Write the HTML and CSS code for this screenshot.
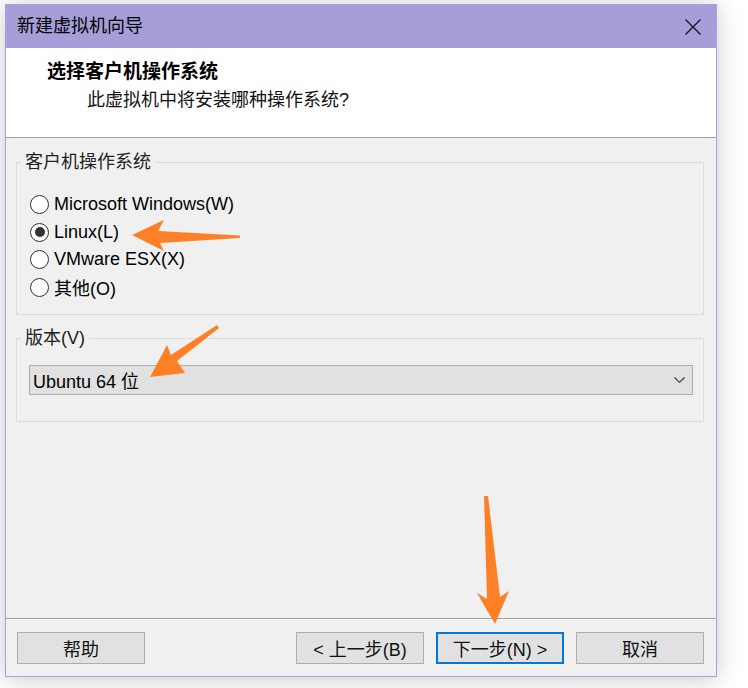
FILE: index.html
```html
<!DOCTYPE html>
<html lang="zh-CN">
<head>
<meta charset="utf-8">
<title>新建虚拟机向导</title>
<link rel="stylesheet" href="styles.css">
</head>
<body>
<div class="window">
  <div class="titlebar">
    <span class="title">新建虚拟机向导</span>
    <svg class="close" width="16" height="16" viewBox="0 0 16 16"><path d="M0.5 0.5 L15.5 15.5 M15.5 0.5 L0.5 15.5" stroke="#111" stroke-width="1.2" fill="none"/></svg>
  </div>
  <div class="header">
    <div class="heading">选择客户机操作系统</div>
    <div class="sub">此虚拟机中将安装哪种操作系统?</div>
  </div>
  <div class="content">
    <fieldset class="group g1">
      <legend>客户机操作系统</legend>
      <div class="radios">
        <div class="radio"><span class="circle"></span>Microsoft Windows(W)</div>
        <div class="radio"><span class="circle checked"></span>Linux(L)</div>
        <div class="radio"><span class="circle"></span>VMware ESX(X)</div>
        <div class="radio"><span class="circle"></span>其他(O)</div>
      </div>
    </fieldset>
    <fieldset class="group g2">
      <legend>版本(V)</legend>
      <div class="select">
        <span>Ubuntu 64 位</span>
        <svg class="chev" width="11" height="6" viewBox="0 0 11 6"><path d="M0.5 0.5 L5.5 5.3 L10.5 0.5" stroke="#333" stroke-width="1.1" fill="none"/></svg>
      </div>
    </fieldset>
  </div>
  <div class="footer">
    <div class="btn">帮助</div>
    <div class="btn push">&lt; 上一步(B)</div>
    <div class="btn primary">下一步(N) &gt;</div>
    <div class="btn">取消</div>
  </div>
</div>
<svg class="arrows" width="748" height="688" viewBox="0 0 748 688">
  <polygon fill="#fe8026" points="132,235 164,220 158,231 240,235.5 240,238 160,243 164,251"/>
  <polygon fill="#fe8026" points="150,377 167,345 171,355 217,325 219,328 177,361 185,373"/>
  <polygon fill="#fe8026" points="484,496 488,496 500,597 509,591 495,624 477,593 487,599"/>
</svg>
</body>
</html>
```
FILE: styles.css
```css
html, body {
  margin: 0;
  padding: 0;
  background: #ffffff;
}
body {
  position: relative;
  width: 748px;
  height: 688px;
  overflow: hidden;
  font-family: "Liberation Sans", "Noto Sans CJK SC", sans-serif;
  font-size: 18px;
  color: #000;
}
.window {
  margin: 4px 0 0 5px;
  width: 712px;
  height: 673px;
  box-sizing: border-box;
  border: 1px solid #ab9fe0;
  display: flex;
  flex-direction: column;
  background: #f0f0f0;
  box-shadow: 0 2px 22px rgba(0, 0, 0, 0.22);
}
.titlebar {
  height: 43px;
  flex: none;
  background: #a69ed8;
  display: flex;
  align-items: center;
  padding: 0 15px 0 11px;
}
.title {
  flex: 1;
  font-size: 18px;
  line-height: 22px;
  padding-bottom: 1px;
}
.close {
  display: block;
  margin-top: 1px;
}
.header {
  height: 90px;
  flex: none;
  box-sizing: border-box;
  background: #ffffff;
  border-bottom: 1px solid #a0a0a0;
  padding: 12px 0 0 41px;
}
.heading {
  font-size: 19px;
  font-weight: 700;
  line-height: 24px;
}
.sub {
  font-size: 18px;
  line-height: 24px;
  margin: 4px 0 0 40px;
  color: #111;
}
.content {
  flex: 1;
  padding: 13px 12px 0 10px;
}
.group {
  margin: 0;
  border: 1px solid #dcdcdc;
  padding: 0 0 13px 4px;
  min-width: 0;
}
.group legend {
  padding: 0 4px;
  font-size: 18px;
  line-height: 22px;
  color: #222;
}
.g2 {
  margin-top: 12px;
  padding-bottom: 26px;
}
.radios {
  margin-top: 18px;
  padding-left: 9px;
}
.radio {
  height: 27.5px;
  display: flex;
  align-items: center;
  gap: 5px;
}
.circle {
  width: 19px;
  height: 19px;
  box-sizing: border-box;
  border: 1px solid #333;
  border-radius: 50%;
  background: #fff;
  display: flex;
  align-items: center;
  justify-content: center;
}
.circle.checked::after {
  content: "";
  width: 10px;
  height: 10px;
  border-radius: 50%;
  background: #333;
}
.select {
  margin: 16px 10px 0 8px;
  height: 30px;
  box-sizing: border-box;
  border: 1px solid #adadad;
  background: #e1e1e1;
  display: flex;
  align-items: center;
  justify-content: space-between;
  padding: 0 7px 0 3px;
}
.chev {
  display: block;
}
.footer {
  height: 58px;
  flex: none;
  box-sizing: border-box;
  border-top: 1px solid #a0a0a0;
  box-shadow: inset 0 1px 0 #ffffff;
  display: flex;
  gap: 12px;
  padding: 13px 12px 0 11px;
}
.btn {
  width: 128px;
  height: 32px;
  box-sizing: border-box;
  border: 1px solid #adadad;
  background: #e1e1e1;
  display: flex;
  align-items: center;
  justify-content: center;
  font-size: 18px;
  color: #111;
}
.btn.push {
  margin-left: auto;
}
.btn.primary {
  border: 2px solid #0078d7;
}
.arrows {
  position: absolute;
  left: 0;
  top: 0;
  pointer-events: none;
}
```
